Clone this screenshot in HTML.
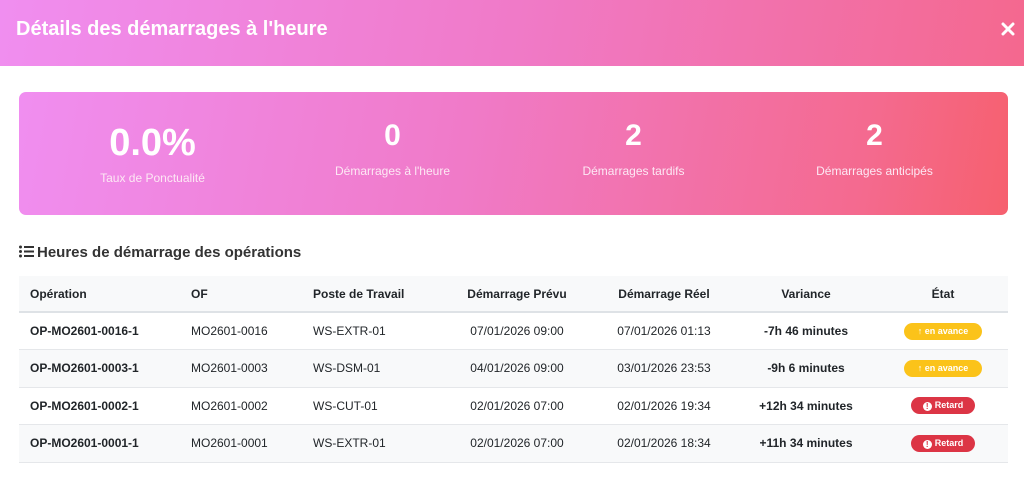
<!DOCTYPE html>
<html><head><meta charset="utf-8"><style>
*{margin:0;padding:0;box-sizing:border-box}
body{width:1024px;height:478px;background:#fff;font-family:"Liberation Sans",Arial,sans-serif;overflow:hidden;position:relative;color:#212529}
.hdr{position:absolute;left:0;top:0;width:1024px;height:66px;background:linear-gradient(100deg,#f08ef0 0%,#f07ac8 50%,#f4688e 100%)}
.hdr h1{position:absolute;left:16px;top:18px;font-size:20px;font-weight:bold;color:#fff}
.x{position:absolute;right:9px;top:22px}
.stats{position:absolute;left:19px;top:92px;width:989px;height:123px;border-radius:7px;background:linear-gradient(100deg,#f08ef0 0%,#f07ac8 45%,#f46a8f 85%,#f6606e 100%)}
.s{position:absolute;top:0;width:247px;text-align:center;color:#fff}
.s b{display:block;font-size:30px}
.s span{display:block;font-size:12px;color:#fde8f4}
.title{position:absolute;left:19px;top:244px;font-size:15px;font-weight:bold;color:#333}
.title svg{vertical-align:-1px;margin-right:3px}
table{position:absolute;left:19px;top:276px;width:989px;border-collapse:collapse;font-size:12px;table-layout:fixed}
th{background:#f8f9fa;height:36px;font-weight:bold;text-align:left;padding-left:11px;border-bottom:2px solid #dee2e6}
td{height:37.5px;padding-left:11px;border-bottom:1px solid #e5e7ea}
tr:nth-child(odd) td{background:#f8f9fa}
.c{text-align:center;padding-left:0}
.b{font-weight:bold}
.bd{display:inline-block;font-size:9px;font-weight:bold;color:#fff;border-radius:9px;height:17px;line-height:17px}
.y{background:#fbc31a;width:78px}
.r{background:#dc3545;width:64px}
.ic{display:inline-block;width:9px;height:9px;border-radius:50%;background:#fff;color:#dc3545;font-size:8px;line-height:9px;text-align:center;vertical-align:-1px;margin-right:3px}
</style></head><body>
<div class="hdr"><h1>Détails des démarrages à l'heure</h1>
<svg class="x" width="14" height="14" viewBox="0 0 14 14"><path d="M2 2L12 12M12 2L2 12" stroke="#fff" stroke-width="3" stroke-linecap="round"/></svg></div>
<div class="stats">
<div class="s" style="left:10px;top:30px"><b style="font-size:38px">0.0%</b><span style="margin-top:6px">Taux de Ponctualité</span></div>
<div class="s" style="left:250px;top:27px"><b>0</b><span style="margin-top:11px">Démarrages à l'heure</span></div>
<div class="s" style="left:491px;top:27px"><b>2</b><span style="margin-top:11px">Démarrages tardifs</span></div>
<div class="s" style="left:732px;top:27px"><b>2</b><span style="margin-top:11px">Démarrages anticipés</span></div>
</div>
<div class="title"><svg width="15" height="13" viewBox="0 0 15 13"><g fill="#333"><circle cx="1.5" cy="2" r="1.5"/><circle cx="1.5" cy="6.5" r="1.5"/><circle cx="1.5" cy="11" r="1.5"/><rect x="5" y="1" width="10" height="2"/><rect x="5" y="5.5" width="10" height="2"/><rect x="5" y="10" width="10" height="2"/></g></svg>Heures de démarrage des opérations</div>
<table>
<colgroup><col style="width:161px"><col style="width:122px"><col style="width:138px"><col style="width:154px"><col style="width:140px"><col style="width:144px"><col style="width:130px"></colgroup>
<tr><th>Opération</th><th>OF</th><th>Poste de Travail</th><th class="c">Démarrage Prévu</th><th class="c">Démarrage Réel</th><th class="c">Variance</th><th class="c">État</th></tr>
<tr><td class="b">OP-MO2601-0016-1</td><td>MO2601-0016</td><td>WS-EXTR-01</td><td class="c">07/01/2026 09:00</td><td class="c">07/01/2026 01:13</td><td class="c b">-7h 46 minutes</td><td class="c"><span class="bd y">↑ en avance</span></td></tr>
<tr><td class="b">OP-MO2601-0003-1</td><td>MO2601-0003</td><td>WS-DSM-01</td><td class="c">04/01/2026 09:00</td><td class="c">03/01/2026 23:53</td><td class="c b">-9h 6 minutes</td><td class="c"><span class="bd y">↑ en avance</span></td></tr>
<tr><td class="b">OP-MO2601-0002-1</td><td>MO2601-0002</td><td>WS-CUT-01</td><td class="c">02/01/2026 07:00</td><td class="c">02/01/2026 19:34</td><td class="c b">+12h 34 minutes</td><td class="c"><span class="bd r"><span class="ic">!</span>Retard</span></td></tr>
<tr><td class="b">OP-MO2601-0001-1</td><td>MO2601-0001</td><td>WS-EXTR-01</td><td class="c">02/01/2026 07:00</td><td class="c">02/01/2026 18:34</td><td class="c b">+11h 34 minutes</td><td class="c"><span class="bd r"><span class="ic">!</span>Retard</span></td></tr>
</table>
</body></html>
